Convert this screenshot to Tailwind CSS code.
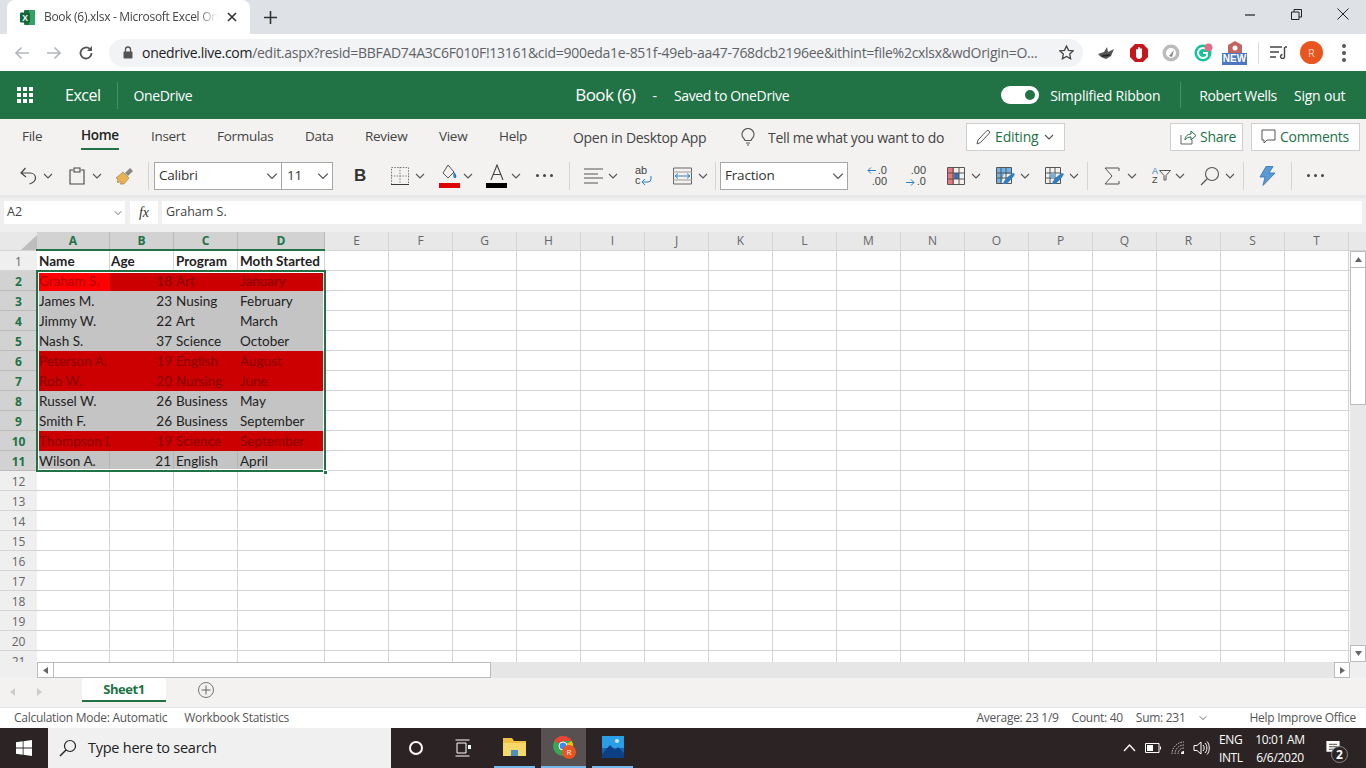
<!DOCTYPE html>
<html><head><meta charset="utf-8"><title>Book (6)</title>
<script src="https://cdn.jsdelivr.net/npm/@tailwindcss/browser@4"></script></head>
<body class="m-0 overflow-hidden">
<svg class="hidden"><defs>
<symbol id="chev" viewBox="0 0 10 10"><path d="M1 3l4 4 4-4" fill="none" stroke="#555" stroke-width="1.1"/></symbol>
</defs></svg>
<div class="w-[1366px] h-[768px] flex flex-col overflow-hidden bg-white text-[#333] font-['Open_Sans','Noto_Sans',sans-serif]">

<!-- tab strip -->
<div class="h-[34px] shrink-0 bg-[#dee1e6] flex items-end relative">
  <div class="w-[243px] h-[34px] ml-[7px] mt-0 bg-white rounded-t-lg flex items-center pl-[12px]">
    <svg width="17" height="17" viewBox="0 0 17 17"><rect x="5" y="1" width="11" height="15" rx="1" fill="#1d7044"/><rect x="10" y="1" width="6" height="15" fill="#33a267"/><rect x="1" y="3.5" width="10" height="10" rx="1" fill="#10683a"/><text x="3.2" y="11.8" font-size="8.5" font-weight="700" fill="#fff" font-family="Liberation Sans">X</text></svg>
    <span class="ml-[8px] w-[174px] text-[12px] tracking-[-0.3px] text-[#444] whitespace-nowrap overflow-hidden [mask-image:linear-gradient(90deg,#000_88%,transparent)]">Book (6).xlsx - Microsoft Excel Online</span>
    <svg class="ml-[9px]" width="10" height="10" viewBox="0 0 10 10"><path d="M1 1l8 8M9 1l-8 8" stroke="#333" stroke-width="1.6"/></svg>
  </div>
  <svg class="ml-[14px] mb-[10px]" width="13" height="13" viewBox="0 0 13 13"><path d="M6.5 0v13M0 6.5h13" stroke="#333" stroke-width="1.6"/></svg>
  <div class="ml-auto mr-[17px] mb-[14px] flex items-center gap-[35px]">
    <svg width="11" height="11" viewBox="0 0 11 11"><path d="M0 6h10" stroke="#222" stroke-width="1.2"/></svg>
    <svg width="11" height="11" viewBox="0 0 11 11"><path d="M.5 3h7.5v7.5H.5zM3 3V.5h7.5V8H8" fill="none" stroke="#222"/></svg>
    <svg width="12" height="12" viewBox="0 0 12 12"><path d="M.5.5l11 11M11.5.5l-11 11" stroke="#222"/></svg>
  </div>
</div>

<!-- url bar -->
<div class="h-[37px] shrink-0 bg-white flex items-center">
  <svg class="ml-[14px]" width="16" height="14" viewBox="0 0 16 14"><path d="M15 7H2M7.5 1.5L2 7l5.5 5.5" fill="none" stroke="#b4b7bb" stroke-width="1.7"/></svg>
  <svg class="ml-[16px]" width="16" height="14" viewBox="0 0 16 14"><path d="M1 7h13M8.5 1.5L14 7l-5.500 5.500" fill="none" stroke="#b4b7bb" stroke-width="1.7"/></svg>
  <svg class="ml-[16px]" width="16" height="16" viewBox="0 0 16 16"><path d="M13.500 8a5.500 5.500 0 1 1-1.600-3.900" fill="none" stroke="#555" stroke-width="1.800"/><path d="M14 1v5H9z" fill="#555"/></svg>
  <div class="ml-[15px] w-[974px] h-[28px] bg-[#f1f3f4] rounded-full flex items-center pl-[14px]">
    <svg width="10" height="13" viewBox="0 0 10 13"><path d="M2.500 6V3.500a2.500 2.500 0 0 1 5 0V6" fill="none" stroke="#555" stroke-width="1.300"/><rect x="0.500" y="5.500" width="9" height="7" rx="1" fill="#555"/></svg>
    <span class="ml-[9px] w-[905px] text-[14px] tracking-[-0.28px] text-[#5f6368] whitespace-nowrap"><span class="text-[#202124]">onedrive.live.com</span>/edit.aspx?resid=BBFAD74A3C6F010F!13161&amp;cid=900eda1e-851f-49eb-aa47-768dcb2196ee&amp;ithint=file%2cxlsx&amp;wdOrigin=O...</span>
    <svg class="ml-[12px]" width="15" height="15" viewBox="0 0 15 15"><path d="M7.500 1l2 4.300 4.700.6-3.500 3.200.9 4.700-4.100-2.300-4.100 2.300.9-4.700L.8 5.900l4.700-.6z" fill="none" stroke="#444" stroke-width="1.300"/></svg>
  </div>
  <svg class="ml-[14px]" width="18" height="16" viewBox="0 0 18 16"><path d="M1 9l6-2 3-5 1 5 6-3-3 7-5 3-5-2z" fill="#555"/><path d="M5 11l8-1" stroke="#222" stroke-width="1.500"/></svg>
  <svg class="ml-[15px]" width="18" height="20" viewBox="0 0 18 20"><path d="M5 1h8l5 5v8l-5 5H5l-5-5V6z" fill="#c8141c"/><path d="M6 14V7a1 1 0 0 1 2 0V5a1 1 0 0 1 2 0v1a1 1 0 0 1 2 .5V14l-2 2H8z" fill="#fff"/></svg>
  <svg class="ml-[14px]" width="18" height="18" viewBox="0 0 18 18"><circle cx="9" cy="9" r="8.500" fill="#bbb"/><circle cx="9" cy="9" r="5" fill="#fff"/><path d="M7 12l5-6-2 7z" fill="#888"/></svg>
  <svg class="ml-[14px]" width="19" height="19" viewBox="0 0 19 19"><circle cx="9" cy="10" r="8.500" fill="#15c39a"/><path d="M13 7a5 5 0 1 0 0 6V10H9" fill="none" stroke="#fff" stroke-width="2"/><circle cx="14.500" cy="4.500" r="4" fill="#e0708a"/></svg>
  <div class="ml-[9px] w-[25px] h-[26px] flex flex-col items-center">
    <svg width="16" height="13" viewBox="0 0 16 13"><path d="M1 5l7-4 7 4v8H1z" fill="#c4645f"/><circle cx="8" cy="8" r="2.500" fill="#fff"/></svg>
    <div class="w-[25px] h-[12px] bg-[#4a78c4] text-white text-[10px] leading-[12px] font-bold text-center font-['Liberation_Sans']">NEW</div>
  </div>
  <div class="ml-[11px] w-px h-[22px] bg-[#ddd]"></div>
  <svg class="ml-[11px]" width="17" height="13" viewBox="0 0 17 13"><path d="M0 1h12M0 6h9M0 11h6" stroke="#444" stroke-width="1.400"/><path d="M15 1h2M14.500 1v9a2 2 0 1 1-2-1.500" fill="none" stroke="#444" stroke-width="1.400"/></svg>
  <div class="ml-[13px] w-[23px] h-[23px] rounded-full bg-[#e8551f] text-[#ffd9c8] text-[11px] leading-[23px] text-center">R</div>
  <div class="ml-[19px] flex flex-col gap-[3px]"><i class="block w-[4px] h-[4px] rounded-full bg-[#555]"></i><i class="block w-[4px] h-[4px] rounded-full bg-[#555]"></i><i class="block w-[4px] h-[4px] rounded-full bg-[#555]"></i></div>
</div>

<!-- app bar -->
<div class="h-[48px] shrink-0 bg-[#217346] flex items-center text-white relative">
  <div class="ml-[17px] grid grid-cols-3 gap-[2px] w-[16px]">
    <i class="block h-[4px] bg-white"></i><i class="block h-[4px] bg-white"></i><i class="block h-[4px] bg-white"></i><i class="block h-[4px] bg-white"></i><i class="block h-[4px] bg-white"></i><i class="block h-[4px] bg-white"></i><i class="block h-[4px] bg-white"></i><i class="block h-[4px] bg-white"></i><i class="block h-[4px] bg-white"></i>
  </div>
  <span class="ml-[32px] text-[16px] tracking-[-0.5px]">Excel</span>
  <div class="ml-[17px] w-px h-[27px] bg-[#4b8f6a]"></div>
  <span class="ml-[15px] text-[14px] tracking-[-0.35px]">OneDrive</span>
  <span class="ml-[383px] text-[17px] tracking-[-0.55px]">Book (6)</span>
  <span class="ml-[17px] text-[14px]">-</span>
  <span class="ml-[17px] text-[14px] tracking-[-0.35px]">Saved to OneDrive</span>
  <div class="ml-[212px] w-[38px] h-[18px] bg-white rounded-full flex items-center justify-end pr-[4px]"><i class="block w-[10px] h-[10px] rounded-full bg-[#217346]"></i></div>
  <span class="ml-[11px] text-[14px] tracking-[-0.25px]">Simplified Ribbon</span>
  <div class="ml-[20px] w-px h-[26px] bg-[#4b8f6a]"></div>
  <span class="ml-[18px] text-[14px] tracking-[-0.4px]">Robert Wells</span>
  <span class="ml-[17px] text-[14px] tracking-[-0.2px]">Sign out</span>
</div>

<!-- ribbon tabs -->
<div class="h-[35px] shrink-0 bg-[#f3f2f1] flex items-center text-[13.500px] tracking-[-0.3px] text-[#444]">
  <span class="ml-[22px] w-[59px]">File</span>
  <span class="w-[70px] h-[35px] relative font-semibold text-[#222] leading-[33px]">Home<i class="absolute left-0 top-[29px] w-[38px] h-[2px] bg-[#217346]"></i></span>
  <span class="w-[66px]">Insert</span>
  <span class="w-[88px]">Formulas</span>
  <span class="w-[60px]">Data</span>
  <span class="w-[74px]">Review</span>
  <span class="w-[60px]">View</span>
  <span class="w-[74px]">Help</span>
  <span class="w-[167px] text-[14px] pt-[2px]">Open in Desktop App</span>
  <svg width="16" height="18" viewBox="0 0 16 18"><path d="M5 12.500C4 10 2 9.500 2 6.500a6 6 0 0 1 12 0c0 3-2 3.500-3 6zM6 15h4M7 17h2" fill="none" stroke="#555" stroke-width="1.100"/></svg>
  <span class="ml-[12px] w-[198px] text-[14px] pt-[2px]">Tell me what you want to do</span>
  <div class="w-[99px] h-[28px] bg-white border border-[#cfcfcf] flex items-center pl-[9px] text-[#217346] text-[14px] tracking-[-0.15px]">
    <svg width="15" height="16" viewBox="0 0 15 16"><path d="M1 15l1-4 9-9.500c1-1 3.500 1.500 2.500 2.500L4.500 13.500z" fill="none" stroke="#555"/></svg>
    <span class="ml-[4px]">Editing</span>
    <svg class="ml-[5px]" width="10" height="10"><use href="#chev"/></svg>
  </div>
  <div class="ml-[105px] w-[73px] h-[28px] bg-white border border-[#cfcfcf] flex items-center pl-[9px] text-[#217346] text-[14px]">
    <svg width="17" height="16" viewBox="0 0 17 16"><path d="M1 6v9h11v-4" fill="none" stroke="#666"/><path d="M5 11c0-4 3-6 6-6V2l5 4.500L11 11V8c-3 0-5 1-6 3z" fill="none" stroke="#217346"/></svg>
    <span class="ml-[3px]">Share</span>
  </div>
  <div class="ml-[8px] w-[109px] h-[28px] bg-white border border-[#cfcfcf] flex items-center pl-[9px] text-[#217346] text-[14px]">
    <svg width="15" height="15" viewBox="0 0 15 15"><path d="M1 1h13v10H6l-3 3v-3H1z" fill="none" stroke="#555"/></svg>
    <span class="ml-[4px]">Comments</span>
  </div>
</div>

<!-- ribbon tools -->
<div class="h-[41px] shrink-0 bg-[#f3f2f1] flex items-center pt-[2px] text-[#333]">
  <svg class="ml-[19px]" width="18" height="18" viewBox="0 0 18 18"><path d="M6.500 1L2 6l5 4M2 6h9c3 0 5.500 2 5.500 5 0 3-3 5-6 6" fill="none" stroke="#444" stroke-width="1.200"/></svg>
  <svg class="ml-[6px]" width="10" height="10"><use href="#chev"/></svg>
  <svg class="ml-[16px]" width="16" height="18" viewBox="0 0 16 18"><path d="M4 3H1v14h14V3h-3M5 1h6v4H5z" fill="none" stroke="#444" stroke-width="1.100"/></svg>
  <svg class="ml-[7px]" width="10" height="10"><use href="#chev"/></svg>
  <svg class="ml-[13px]" width="19" height="18" viewBox="0 0 19 18"><path d="M1 11l7-6 6 6-5 6H5c1-1 1-2 1-3-1 1-3 2-4 1 1-1 1-2 0-4z" fill="#e8b352" stroke="#9a7a3a" stroke-width=".6"/><path d="M10 6l5-5 3 3-5 5z" fill="#888"/></svg>
  <div class="ml-[14px] w-px h-[28px] bg-[#d4d4d4]"></div>
  <div class="ml-[5px] w-[128px] h-[28px] bg-white border border-[#a6a6a6] flex items-center justify-between pl-[4px] pr-[3px] text-[13.500px] tracking-[-0.2px]"><span>Calibri</span><svg width="12" height="12"><use href="#chev"/></svg></div>
  <div class="w-[51px] h-[28px] bg-white border border-l-0 border-[#a6a6a6] flex items-center justify-between pl-[5px] pr-[3px] text-[13.500px] tracking-[-0.2px]"><span>11</span><svg width="12" height="12"><use href="#chev"/></svg></div>
  <span class="ml-[21px] w-[14px] text-[17px] font-bold text-[#333] font-['Liberation_Sans']">B</span>
  <svg class="ml-[23px]" width="18" height="18" viewBox="0 0 19 19"><path d="M.5.500h18v18H.500z" fill="none" stroke="#666" stroke-dasharray="1.500 1.500"/><path d="M9.500 0v19M0 9.500h19" stroke="#777" stroke-dasharray="1.500 1.500"/><path d="M0 18.500h19" stroke="#333"/></svg>
  <svg class="ml-[6px]" width="10" height="10"><use href="#chev"/></svg>
  <div class="ml-[14px] w-[21px] h-[24px] flex flex-col items-center justify-between">
    <svg width="18" height="17" viewBox="0 0 18 17"><path d="M7 1L2 9l5 5 6-6z" fill="none" stroke="#555"/><path d="M13 8c2 2 3 4 2 6h-2c-1-2-1-4 0-6z" fill="#2f7fc0"/></svg>
    <i class="block w-[21px] h-[5px] bg-[#e00000]"></i>
  </div>
  <svg class="ml-[3px]" width="10" height="10"><use href="#chev"/></svg>
  <div class="ml-[13px] w-[21px] h-[24px] flex flex-col items-center justify-between">
    <svg width="14" height="16" viewBox="0 0 14 16"><path d="M1 16L7 1l6 15M3.500 10.500h7" fill="none" stroke="#444" stroke-width="1.100"/></svg>
    <i class="block w-[21px] h-[5px] bg-black"></i>
  </div>
  <svg class="ml-[4px]" width="10" height="10"><use href="#chev"/></svg>
  <span class="ml-[15px] flex gap-[4px]"><i class="block w-[3px] h-[3px] rounded-full bg-[#444]"></i><i class="block w-[3px] h-[3px] rounded-full bg-[#444]"></i><i class="block w-[3px] h-[3px] rounded-full bg-[#444]"></i></span>
  <div class="ml-[16px] w-px h-[28px] bg-[#d4d4d4]"></div>
  <svg class="ml-[14px]" width="20" height="18" viewBox="0 0 20 18"><path d="M0 2h19M0 7h14M0 11h19M0 16h14" stroke="#555"/></svg>
  <svg class="ml-[4px]" width="10" height="10"><use href="#chev"/></svg>
  <span class="ml-[17px] w-[17px] h-[22px] relative text-[11px] leading-[10px] text-[#444] font-['Liberation_Sans']">ab<br>c<svg class="absolute left-[6px] top-[10px]" width="11" height="10" viewBox="0 0 11 10"><path d="M10 1v3a3 3 0 0 1-3 3H1M4 4L1 7l3 3" fill="none" stroke="#2f7fc0"/></svg></span>
  <svg class="ml-[21px]" width="19" height="18" viewBox="0 0 19 18"><path d="M.5 1h18v16H.500z" fill="none" stroke="#666"/><path d="M0 5h19M0 13h19" stroke="#999"/><path d="M2 9h15M5 6.500L2 9l3 2.500M14 6.500L17 9l-3 2.500" fill="none" stroke="#2f7fc0"/></svg>
  <svg class="ml-[6px]" width="10" height="10"><use href="#chev"/></svg>
  <div class="ml-[7px] w-px h-[28px] bg-[#d4d4d4]"></div>
  <div class="ml-[4px] w-[128px] h-[28px] bg-white border border-[#a6a6a6] flex items-center justify-between pl-[4px] pr-[3px] text-[13.500px] tracking-[-0.2px]"><span>Fraction</span><svg width="12" height="12"><use href="#chev"/></svg></div>
  <div class="ml-[19px] w-[20px] h-[22px] relative text-[11px] leading-[11px] text-[#444] font-['Liberation_Sans'] text-right"><svg class="absolute left-0 top-[2px]" width="9" height="7" viewBox="0 0 9 7"><path d="M9 3.500H1M4 .5l-3 3 3 3" fill="none" stroke="#2f7fc0"/></svg>.0<br>.00</div>
  <div class="ml-[19px] w-[20px] h-[22px] relative text-[11px] leading-[11px] text-[#444] font-['Liberation_Sans'] text-right">.00<br>.0<svg class="absolute left-0 top-[14px]" width="9" height="7" viewBox="0 0 9 7"><path d="M0 3.500h8M5 .5l3 3-3 3" fill="none" stroke="#2f7fc0"/></svg></div>
  <svg class="ml-[21px]" width="18" height="18" viewBox="0 0 18 18"><path d="M1 1h6v16H1z" fill="#e8777c"/><path d="M7 6h5v6H7z" fill="#3a6fb0"/><path d="M.5.500h17v17H.500zM6 0v18M12 0v18M0 6h18M0 12h18" fill="none" stroke="#555"/></svg>
  <svg class="ml-[6px]" width="10" height="10"><use href="#chev"/></svg>
  <svg class="ml-[15px]" width="20" height="18" viewBox="0 0 20 18"><path d="M1 1h15v6H8l-3 10H1z" fill="#6fb2e8"/><path d="M.5.500h15v16H.500zM0 6h16M0 11h16M5 0v17M10 0v17" fill="none" stroke="#555"/><path d="M7 17c0-3 5-8 10-11l2 1c-2 4-6 8-9 10z" fill="#2f7fc0"/></svg>
  <svg class="ml-[4px]" width="10" height="10"><use href="#chev"/></svg>
  <svg class="ml-[15px]" width="20" height="18" viewBox="0 0 20 18"><path d="M.5.500h15v16H.500zM0 6h16M0 11h16M5 0v17M10 0v17" fill="none" stroke="#555"/><path d="M6 6h4v5H6z" fill="#6fb2e8"/><path d="M7 17c0-3 5-8 10-11l2 1c-2 4-6 8-9 10z" fill="#2f7fc0"/></svg>
  <svg class="ml-[4px]" width="10" height="10"><use href="#chev"/></svg>
  <div class="ml-[8px] w-px h-[28px] bg-[#d4d4d4]"></div>
  <svg class="ml-[16px]" width="16" height="18" viewBox="0 0 16 18"><path d="M15 4V1H1l7 8-7 8h14v-3" fill="none" stroke="#555"/></svg>
  <svg class="ml-[7px]" width="10" height="10"><use href="#chev"/></svg>
  <div class="ml-[15px] w-[19px] h-[20px] flex items-center">
    <span class="text-[9px] leading-[9px] text-[#444] font-['Liberation_Sans'] w-[7px]"><span class="text-[#2f7fc0]">A</span><br>Z</span>
    <svg width="12" height="11" viewBox="0 0 12 11"><path d="M.5.500h11L7 5.500V10H5V5.500z" fill="none" stroke="#555"/></svg>
  </div>
  <svg class="ml-[4px]" width="10" height="10"><use href="#chev"/></svg>
  <svg class="ml-[15px]" width="20" height="20" viewBox="0 0 20 20"><circle cx="12" cy="8" r="6.500" fill="none" stroke="#555" stroke-width="1.100"/><path d="M7 13l-6 6" stroke="#555" stroke-width="1.300"/></svg>
  <svg class="ml-[5px]" width="10" height="10"><use href="#chev"/></svg>
  <div class="ml-[8px] w-px h-[28px] bg-[#d4d4d4]"></div>
  <svg class="ml-[15px]" width="17" height="20" viewBox="0 0 17 20"><path d="M7 .5L1 11h5L4 19.500 16 7h-6l4-6.500z" fill="#5b9bd5" stroke="#2f6fb5" stroke-width=".8"/></svg>
  <div class="ml-[15px] w-px h-[28px] bg-[#d4d4d4]"></div>
  <span class="ml-[15px] flex gap-[4px]"><i class="block w-[3px] h-[3px] rounded-full bg-[#444]"></i><i class="block w-[3px] h-[3px] rounded-full bg-[#444]"></i><i class="block w-[3px] h-[3px] rounded-full bg-[#444]"></i></span>
</div>

<!-- formula bar -->
<div class="h-[37px] shrink-0 bg-[#efefef] border-t-[3px] border-[#e8e8e8] flex pt-[3px] items-start text-[12.500px] text-[#444]">
  <div class="ml-[4px] w-[121px] h-[23px] bg-white flex items-center justify-between pl-[3px] pr-[3px]"><span>A2</span><svg width="8" height="8"><use href="#chev"/></svg></div>
  <div class="ml-[5px] w-[28px] h-[23px] bg-white flex items-center justify-center font-['Liberation_Serif'] italic text-[14px] text-[#333]">fx</div>
  <div class="ml-[4px] w-[1200px] h-[23px] bg-white flex items-center pl-[4px]">Graham S.</div>
</div>

<!-- sheet -->
<div class="h-[430px] shrink-0 bg-white relative overflow-hidden">
  <!-- col headers -->
  <div class="h-[19px] flex bg-[#e8e8e8] text-[12px] leading-[18px] text-[#666] text-center border-b border-[#d4d4d4]">
    <div class="w-[37px] bg-[#e8e8e8] relative"><svg class="absolute right-0 bottom-0" width="16" height="15" viewBox="0 0 16 15"><path d="M16 0v15H0z" fill="#bdbdbd"/></svg></div>
    <div class="w-[73px] bg-[#d2d2d2] text-[#217346] font-bold border-r border-[#bbb]">A</div>
    <div class="w-[64px] bg-[#d2d2d2] text-[#217346] font-bold border-r border-[#bbb]">B</div>
    <div class="w-[64px] bg-[#d2d2d2] text-[#217346] font-bold border-r border-[#bbb]">C</div>
    <div class="w-[87px] bg-[#d2d2d2] text-[#217346] font-bold border-r border-[#bbb]">D</div>
    <div class="w-[64px] border-r border-[#d4d4d4]">E</div><div class="w-[64px] border-r border-[#d4d4d4]">F</div><div class="w-[64px] border-r border-[#d4d4d4]">G</div><div class="w-[64px] border-r border-[#d4d4d4]">H</div><div class="w-[64px] border-r border-[#d4d4d4]">I</div><div class="w-[64px] border-r border-[#d4d4d4]">J</div><div class="w-[64px] border-r border-[#d4d4d4]">K</div><div class="w-[64px] border-r border-[#d4d4d4]">L</div><div class="w-[64px] border-r border-[#d4d4d4]">M</div><div class="w-[64px] border-r border-[#d4d4d4]">N</div><div class="w-[64px] border-r border-[#d4d4d4]">O</div><div class="w-[64px] border-r border-[#d4d4d4]">P</div><div class="w-[64px] border-r border-[#d4d4d4]">Q</div><div class="w-[64px] border-r border-[#d4d4d4]">R</div><div class="w-[64px] border-r border-[#d4d4d4]">S</div><div class="w-[64px] border-r border-[#d4d4d4]">T</div>
  </div>
  <!-- rows -->
  <div class="h-[411px] overflow-hidden font-['Lato',sans-serif] text-[13.500px] leading-[21px] text-[#222] bg-[repeating-linear-gradient(180deg,transparent_0,transparent_19px,#d4d4d4_19px,#d4d4d4_20px),linear-gradient(90deg,#fff_0,#fff_109px,#d4d4d4_109px,#d4d4d4_110px,#fff_110px,#fff_173px,#d4d4d4_173px,#d4d4d4_174px,#fff_174px,#fff_237px,#d4d4d4_237px,#d4d4d4_238px,#fff_238px,#fff_324px,#d4d4d4_324px,#d4d4d4_325px,transparent_325px),repeating-linear-gradient(90deg,transparent_0,transparent_4px,#d4d4d4_4px,#d4d4d4_5px,transparent_5px,transparent_64px)]">
    <div class="h-5 flex font-bold"><div class="w-[37px] bg-[#efefef] border-b border-[#d4d4d4] text-center font-['Open_Sans'] font-normal text-[12px] text-[#666]">1</div><div class="w-[73px] pl-[2px] border-r border-b border-[#d4d4d4]">Name</div><div class="w-[64px] pl-[1px] border-r border-b border-[#d4d4d4]">Age</div><div class="w-[64px] pl-[2px] border-r border-b border-[#d4d4d4]">Program</div><div class="w-[87px] pl-[2px] border-r border-b border-[#d4d4d4]">Moth Started</div></div>

    <div class="h-5 flex text-[#880000] bg-[#cc0000] w-[325px] relative"><div class="w-[37px] bg-[#d2d2d2] border-b border-[#bbb] text-center font-['Open_Sans'] font-bold text-[12px] text-[#217346]">2</div><div class="w-[73px] pl-[2px] bg-[#ff0000] text-[#b00000] overflow-hidden whitespace-nowrap">Graham S.</div><div class="w-[64px] pr-[2px] text-right">18</div><div class="w-[64px] pl-[2px]">Art</div><div class="w-[87px] pl-[2px]">January</div></div>

    <div class="h-5 flex bg-[#c4c4c4] w-[325px]"><div class="w-[37px] bg-[#d2d2d2] border-b border-[#bbb] text-center font-['Open_Sans'] font-bold text-[12px] text-[#217346]">3</div><div class="w-[73px] pl-[2px]">James M.</div><div class="w-[64px] pr-[2px] text-right">23</div><div class="w-[64px] pl-[2px]">Nusing</div><div class="w-[87px] pl-[2px]">February</div></div>

    <div class="h-5 flex bg-[#c4c4c4] w-[325px]"><div class="w-[37px] bg-[#d2d2d2] border-b border-[#bbb] text-center font-['Open_Sans'] font-bold text-[12px] text-[#217346]">4</div><div class="w-[73px] pl-[2px]">Jimmy W.</div><div class="w-[64px] pr-[2px] text-right">22</div><div class="w-[64px] pl-[2px]">Art</div><div class="w-[87px] pl-[2px]">March</div></div>

    <div class="h-5 flex bg-[#c4c4c4] w-[325px]"><div class="w-[37px] bg-[#d2d2d2] border-b border-[#bbb] text-center font-['Open_Sans'] font-bold text-[12px] text-[#217346]">5</div><div class="w-[73px] pl-[2px]">Nash S.</div><div class="w-[64px] pr-[2px] text-right">37</div><div class="w-[64px] pl-[2px]">Science</div><div class="w-[87px] pl-[2px]">October</div></div>

    <div class="h-5 flex text-[#880000] bg-[#cc0000] w-[325px]"><div class="w-[37px] bg-[#d2d2d2] border-b border-[#bbb] text-center font-['Open_Sans'] font-bold text-[12px] text-[#217346]">6</div><div class="w-[73px] pl-[2px]">Peterson A.</div><div class="w-[64px] pr-[2px] text-right">19</div><div class="w-[64px] pl-[2px]">English</div><div class="w-[87px] pl-[2px]">August</div></div>

    <div class="h-5 flex text-[#880000] bg-[#cc0000] w-[325px]"><div class="w-[37px] bg-[#d2d2d2] border-b border-[#bbb] text-center font-['Open_Sans'] font-bold text-[12px] text-[#217346]">7</div><div class="w-[73px] pl-[2px]">Rob W.</div><div class="w-[64px] pr-[2px] text-right">20</div><div class="w-[64px] pl-[2px]">Nursing</div><div class="w-[87px] pl-[2px]">June</div></div>

    <div class="h-5 flex bg-[#c4c4c4] w-[325px]"><div class="w-[37px] bg-[#d2d2d2] border-b border-[#bbb] text-center font-['Open_Sans'] font-bold text-[12px] text-[#217346]">8</div><div class="w-[73px] pl-[2px]">Russel W.</div><div class="w-[64px] pr-[2px] text-right">26</div><div class="w-[64px] pl-[2px]">Business</div><div class="w-[87px] pl-[2px]">May</div></div>

    <div class="h-5 flex bg-[#c4c4c4] w-[325px]"><div class="w-[37px] bg-[#d2d2d2] border-b border-[#bbb] text-center font-['Open_Sans'] font-bold text-[12px] text-[#217346]">9</div><div class="w-[73px] pl-[2px]">Smith F.</div><div class="w-[64px] pr-[2px] text-right">26</div><div class="w-[64px] pl-[2px]">Business</div><div class="w-[87px] pl-[2px]">September</div></div>

    <div class="h-5 flex text-[#880000] bg-[#cc0000] w-[325px]"><div class="w-[37px] bg-[#d2d2d2] border-b border-[#bbb] text-center font-['Open_Sans'] font-bold text-[12px] text-[#217346]">10</div><div class="w-[73px] pl-[2px] overflow-hidden whitespace-nowrap">Thompson L.</div><div class="w-[64px] pr-[2px] text-right">19</div><div class="w-[64px] pl-[2px]">Science</div><div class="w-[87px] pl-[2px]">September</div></div>

    <div class="h-5 flex bg-[#c4c4c4] w-[325px]"><div class="w-[37px] bg-[#d2d2d2] border-b border-[#bbb] text-center font-['Open_Sans'] font-bold text-[12px] text-[#217346]">11</div><div class="w-[73px] pl-[2px] border-r border-[#b4b4b4]">Wilson A.</div><div class="w-[64px] pr-[2px] text-right border-r border-[#b4b4b4]">21</div><div class="w-[64px] pl-[2px] border-r border-[#b4b4b4]">English</div><div class="w-[87px] pl-[2px]">April</div></div>

    <div class="h-5 w-[37px] bg-[#efefef] border-b border-[#d4d4d4] text-center font-['Open_Sans'] text-[12px] text-[#666]">12</div>
    <div class="h-5 w-[37px] bg-[#efefef] border-b border-[#d4d4d4] text-center font-['Open_Sans'] text-[12px] text-[#666]">13</div>
    <div class="h-5 w-[37px] bg-[#efefef] border-b border-[#d4d4d4] text-center font-['Open_Sans'] text-[12px] text-[#666]">14</div>
    <div class="h-5 w-[37px] bg-[#efefef] border-b border-[#d4d4d4] text-center font-['Open_Sans'] text-[12px] text-[#666]">15</div>
    <div class="h-5 w-[37px] bg-[#efefef] border-b border-[#d4d4d4] text-center font-['Open_Sans'] text-[12px] text-[#666]">16</div>
    <div class="h-5 w-[37px] bg-[#efefef] border-b border-[#d4d4d4] text-center font-['Open_Sans'] text-[12px] text-[#666]">17</div>
    <div class="h-5 w-[37px] bg-[#efefef] border-b border-[#d4d4d4] text-center font-['Open_Sans'] text-[12px] text-[#666]">18</div>
    <div class="h-5 w-[37px] bg-[#efefef] border-b border-[#d4d4d4] text-center font-['Open_Sans'] text-[12px] text-[#666]">19</div>
    <div class="h-5 w-[37px] bg-[#efefef] border-b border-[#d4d4d4] text-center font-['Open_Sans'] text-[12px] text-[#666]">20</div>
    <div class="h-5 w-[37px] bg-[#efefef] border-b border-[#d4d4d4] text-center font-['Open_Sans'] text-[12px] text-[#666]">21</div>
  </div>
  <!-- selection overlay -->
  <div class="absolute left-[36px] top-[38px] w-[290px] h-[202px] border-2 border-[#217346] shadow-[inset_0_0_0_1px_#fff]"></div>
  <div class="absolute left-[36px] top-[17px] w-[289px] h-[2px] bg-[#217346]"></div>
  <div class="absolute left-[323px] top-[238px] w-[5px] h-[5px] bg-[#217346] border border-white"></div>
  <!-- v scrollbar -->
  <div class="absolute left-[1350px] top-[19px] w-[16px] h-[411px] bg-[#e8e8e8] flex flex-col justify-between">
    <div class="flex flex-col">
      <div class="h-[17px] bg-white border border-[#bbb] flex items-center justify-center"><svg width="7" height="5" viewBox="0 0 7 5"><path d="M3.500 0L7 5H0z" fill="#666"/></svg></div>
      <div class="h-[137px] bg-white border-x border-b border-[#bbb]"></div>
    </div>
    <div class="h-[17px] bg-white border border-[#bbb] flex items-center justify-center"><svg width="7" height="5" viewBox="0 0 7 5"><path d="M3.500 5L7 0H0z" fill="#666"/></svg></div>
  </div>
</div>

<!-- h scrollbar -->
<div class="h-[16px] shrink-0 bg-[#efefef] flex">
  <div class="ml-[37px] w-[1297px] h-[16px] bg-[#e6e6e6] flex">
    <div class="w-[17px] bg-white border border-[#bbb] flex items-center justify-center"><svg width="5" height="7" viewBox="0 0 5 7"><path d="M0 3.500L5 0v7z" fill="#666"/></svg></div>
    <div class="w-[437px] bg-white border-y border-r border-[#bbb]"></div>
  </div>
  <div class="w-[16px] bg-white border border-[#bbb] flex items-center justify-center"><svg width="5" height="7" viewBox="0 0 5 7"><path d="M5 3.500L0 0v7z" fill="#666"/></svg></div>
</div>

<!-- sheet tabs -->
<div class="h-[30px] shrink-0 bg-[#f3f2f1] border-b border-[#e2e2e2] flex items-start">
  <svg class="ml-[10px] mt-[10px]" width="5" height="8" viewBox="0 0 5 8"><path d="M0 4l5-4v8z" fill="#ccc"/></svg>
  <svg class="ml-[22px] mt-[10px]" width="5" height="8" viewBox="0 0 5 8"><path d="M5 4L0 0v8z" fill="#ccc"/></svg>
  <div class="ml-[40px] w-[84px] h-[24px] bg-white border-b-2 border-[#217346] text-center text-[13px] font-bold leading-[22px] text-[#217346] tracking-[-0.4px]">Sheet1</div>
  <svg class="ml-[32px] mt-[4px]" width="16" height="16" viewBox="0 0 16 16"><circle cx="8" cy="8" r="7.500" fill="none" stroke="#777"/><path d="M8 3.500v9M3.500 8h9" stroke="#666"/></svg>
</div>

<!-- status bar -->
<div class="h-[20px] shrink-0 bg-white flex items-center text-[12px] tracking-[-0.28px] text-[#555]">
  <span class="ml-[14px]">Calculation Mode: Automatic</span>
  <span class="ml-[17px]">Workbook Statistics</span>
  <span class="ml-auto">Average: 23 1/9</span>
  <span class="ml-[13px]">Count: 40</span>
  <span class="ml-[13px]">Sum: 231</span>
  <svg class="ml-[13px]" width="8" height="8"><use href="#chev"/></svg>
  <span class="ml-[43px] mr-[10px]">Help Improve Office</span>
</div>

<!-- taskbar -->
<div class="h-[40px] shrink-0 bg-[#2c2424] flex items-center text-white relative">
  <svg class="ml-[16px]" width="16" height="16" viewBox="0 0 16 16"><path d="M0 2.300L6.700 1.300v6.300H0zM7.500 1.200L16 0v7.600H7.500zM0 8.400h6.700v6.300L0 13.700zM7.500 8.400H16V16l-8.500-1.200z" fill="#fff"/></svg>
  <div class="ml-[16px] w-[343px] h-[40px] bg-[#f0f0f0] flex items-center pl-[11px] text-[#222] text-[14.500px] tracking-[-0.25px]">
    <svg width="18" height="18" viewBox="0 0 18 18"><circle cx="11" cy="7" r="5.500" fill="none" stroke="#222" stroke-width="1.200"/><path d="M7 11l-6 6" stroke="#222" stroke-width="1.400"/></svg>
    <span class="ml-[11px]">Type here to search</span>
  </div>
  <div class="ml-[18px] w-[14px] h-[14px] rounded-full border-2 border-white"></div>
  <svg class="ml-[32px]" width="16" height="18" viewBox="0 0 16 18"><path d="M.5 1h14M.5 17h14M2 4h9v10H2z" fill="none" stroke="#fff"/><path d="M13 6h3v4h-3z" fill="#fff"/></svg>
  <div class="ml-[23px] w-[41px] h-[40px] flex items-center justify-center border-b-2 border-[#76b9ed]">
    <svg width="23" height="20" viewBox="0 0 23 20"><path d="M0 1h9l2 3h12v15H0z" fill="#f0c040"/><path d="M0 6h23v13H0z" fill="#f6d76a"/><path d="M8 13h7v6H8z" fill="#4a90c0"/></svg>
  </div>
  <div class="ml-[6px] w-[45px] h-[40px] bg-[#575151] flex items-center justify-center border-b-2 border-[#76b9ed] relative">
    <svg width="24" height="24" viewBox="0 0 24 24"><circle cx="11" cy="11" r="10" fill="#3aa757"/><path d="M11 1a10 10 0 0 1 8.700 5H11a5 5 0 0 0-4.300 2.500L2.300 6A10 10 0 0 1 11 1z" fill="#ea4335"/><path d="M19.700 6a10 10 0 0 1-8.700 15l4.300-7.500A5 5 0 0 0 15 8.500z" fill="#fbbc05"/><circle cx="11" cy="11" r="4" fill="#4285f4" stroke="#fff" stroke-width="1"/><circle cx="17" cy="17" r="7" fill="#e8551f"/><text x="14.500" y="20" font-size="8" fill="#fff" font-family="Open Sans">R</text></svg>
  </div>
  <div class="ml-[6px] w-[41px] h-[40px] flex items-center justify-center border-b-2 border-[#76b9ed]">
    <svg width="22" height="22" viewBox="0 0 22 22"><rect width="22" height="22" fill="#1565b0"/><rect width="22" height="12" fill="#2a9fe8"/><path d="M0 18l8-9 5 5 3-3 6 6v5H0z" fill="#0d3f85"/><circle cx="15" cy="5" r="2" fill="#cfe8ff"/></svg>
  </div>
  <svg class="ml-[490px]" width="13" height="8" viewBox="0 0 13 8"><path d="M1 7l5.500-6L12 7" fill="none" stroke="#fff" stroke-width="1.300"/></svg>
  <svg class="ml-[9px]" width="16" height="10" viewBox="0 0 16 10"><path d="M.5.500h13.500v9H.500z" fill="none" stroke="#fff"/><path d="M2 2h6v6H2z" fill="#fff"/><path d="M15 3.500h1v3h-1z" fill="#fff"/></svg>
  <svg class="ml-[10px]" width="14" height="14" viewBox="0 0 14 14"><path d="M1 13A12 12 0 0 1 13 1M4 13a9 9 0 0 1 9-9M7 13a6 6 0 0 1 6-6" fill="none" stroke="#ccc" stroke-dasharray="1.500 1"/><path d="M10 13a3 3 0 0 1 3-3v3z" fill="#fff"/></svg>
  <svg class="ml-[8px]" width="17" height="16" viewBox="0 0 17 16"><path d="M1 5.500h3L8 2v12L4 10.500H1z" fill="none" stroke="#fff"/><path d="M10 5c1.500 1.500 1.500 4.500 0 6M12 3c2.500 2.500 2.500 7.500 0 10M14 1.500c3 3 3 10 0 13" fill="none" stroke="#fff"/></svg>
  <div class="ml-[9px] w-[26px] text-[12px] tracking-[-0.4px] leading-[18px] pt-[1px]"><div>ENG</div><div>INTL</div></div>
  <div class="w-[70px] text-[12px] tracking-[-0.3px] leading-[18px] text-center pt-[1px]"><div>10:01 AM</div><div>6/6/2020</div></div>
  <div class="ml-[7px] w-[26px] h-[26px] relative">
    <svg class="absolute left-[3px] top-[6px]" width="16" height="14" viewBox="0 0 16 17"><path d="M0 0h16v13h-3v4l-4-4H0z" fill="#fff"/><path d="M3 4h10M3 7h10M3 10h10" stroke="#2c2424"/></svg>
    <div class="absolute left-[9px] top-[11px] w-[17px] h-[17px] rounded-full bg-[#2c2424] border border-[#888] text-[12px] leading-[15px] text-center font-bold">2</div>
  </div>
</div>
</div>
</body></html>
